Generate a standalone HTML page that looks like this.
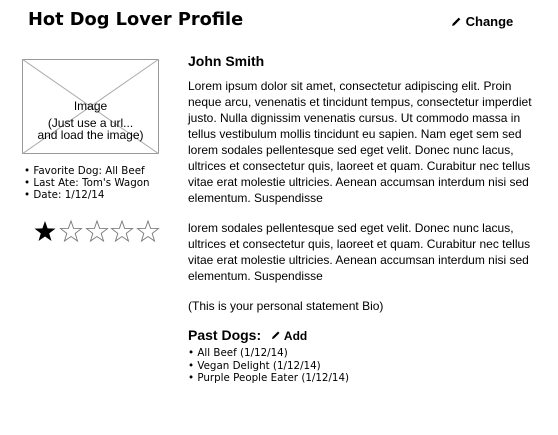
<!DOCTYPE html>
<html><head><style>
body{margin:0;width:558px;height:435px;background:#fff;font-family:"Liberation Sans",Arial,sans-serif;color:#000;position:relative;overflow:hidden}
.a{position:absolute;white-space:nowrap}
h1{position:absolute;left:28px;top:9px;margin:0;font-size:17.8px;font-weight:bold;font-family:"DejaVu Sans","Liberation Sans",sans-serif}
.p{position:absolute;left:188px;font-size:12px;line-height:16px;white-space:nowrap}
.s{font-family:"DejaVu Sans",sans-serif;font-size:10.3px;line-height:12px}
</style></head><body>
<h1>Hot Dog Lover Profile</h1>
<div class="a" style="left:451px;top:14px;font-size:13px;font-weight:bold"><svg width="11" height="11" viewBox="0 0 10 10" style="vertical-align:-1px"><path d="M1 9 L1.5 7 L7 1.5 L8.5 3 L3 8.5 Z" fill="#000"/></svg> Change</div>
<svg class="a" style="left:22px;top:59px" width="137" height="95"><rect x="0.5" y="0.5" width="136" height="94" fill="#fff" stroke="#999"/><line x1="0" y1="0" x2="137" y2="95" stroke="#aaa"/><line x1="137" y1="0" x2="0" y2="95" stroke="#aaa"/></svg>
<div class="a" style="left:22px;top:98px;width:137px;text-align:center;font-size:12px;line-height:16px">Image</div>
<div class="a" style="left:22px;top:117px;width:137px;text-align:center;font-size:12px;line-height:12px">(Just use a url...<br>and load the image)</div>
<div class="a s" style="left:24px;top:165px">• Favorite Dog: All Beef<br>• Last Ate: Tom's Wagon<br>• Date: 1/12/14</div>
<svg class="a" style="left:0;top:0" width="170" height="260">
<defs><path id="st" d="M0,-11 L2.6,-3.6 L10.5,-3.4 L4.2,1.4 L6.5,9 L0,4.5 L-6.5,9 L-4.2,1.4 L-10.5,-3.4 L-2.6,-3.6 Z"/></defs>
<use href="#st" x="45" y="232" fill="#000"/>
<use href="#st" x="71" y="232" fill="#fff" stroke="#777" stroke-width="0.9"/>
<use href="#st" x="97" y="232" fill="#fff" stroke="#777" stroke-width="0.9"/>
<use href="#st" x="122" y="232" fill="#fff" stroke="#777" stroke-width="0.9"/>
<use href="#st" x="148" y="232" fill="#fff" stroke="#777" stroke-width="0.9"/>
</svg>
<div class="a" style="left:188px;top:53px;font-size:14px;font-weight:bold">John Smith</div>
<div class="p" style="top:78px">Lorem ipsum dolor sit amet, consectetur adipiscing elit. Proin<br>neque arcu, venenatis et tincidunt tempus, consectetur imperdiet<br>justo. Nulla dignissim venenatis cursus. Ut commodo massa in<br>tellus vestibulum mollis tincidunt eu sapien. Nam eget sem sed<br>lorem sodales pellentesque sed eget velit. Donec nunc lacus,<br>ultrices et consectetur quis, laoreet et quam. Curabitur nec tellus<br>vitae erat molestie ultricies. Aenean accumsan interdum nisi sed<br>elementum. Suspendisse</div>
<div class="p" style="top:220px">lorem sodales pellentesque sed eget velit. Donec nunc lacus,<br>ultrices et consectetur quis, laoreet et quam. Curabitur nec tellus<br>vitae erat molestie ultricies. Aenean accumsan interdum nisi sed<br>elementum. Suspendisse</div>
<div class="p" style="top:298px">(This is your personal statement Bio)</div>
<div class="a" style="left:188px;top:327px;font-size:14px;font-weight:bold">Past Dogs: <span style="font-size:12px;margin-left:6px"><svg width="10" height="10" viewBox="0 0 10 10"><path d="M1 9 L1.5 7 L7 1.5 L8.5 3 L3 8.5 Z" fill="#000"/></svg> Add</span></div>
<div class="a s" style="left:188px;top:347px;line-height:12.5px">• All Beef (1/12/14)<br>• Vegan Delight (1/12/14)<br>• Purple People Eater (1/12/14)</div>
</body></html>
